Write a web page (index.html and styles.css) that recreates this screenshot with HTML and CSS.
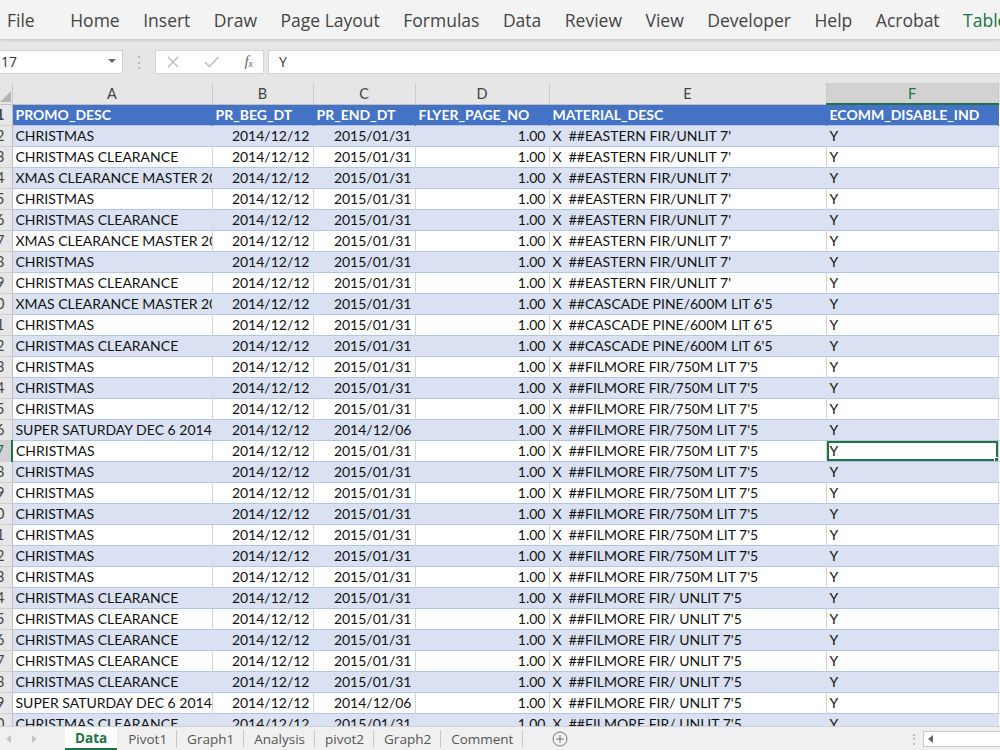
FILE: index.html
```html
<!DOCTYPE html>
<html lang="en">
<head>
    <meta charset="UTF-8">
    <title>Book1 - Excel</title>
    <link rel="stylesheet" href="styles.css">
</head>
<body>
    <div class="menubar">
        <span class="menu-item first">File</span>
        <span class="menu-item">Home</span>
        <span class="menu-item">Insert</span>
        <span class="menu-item">Draw</span>
        <span class="menu-item">Page Layout</span>
        <span class="menu-item">Formulas</span>
        <span class="menu-item">Data</span>
        <span class="menu-item">Review</span>
        <span class="menu-item">View</span>
        <span class="menu-item">Developer</span>
        <span class="menu-item">Help</span>
        <span class="menu-item">Acrobat</span>
        <span class="menu-item table-tab">Table Design</span>
    </div>

    <div class="formula-bar">
        <div class="name-box">
            <span>17</span>
            <svg class="caret" width="8" height="5" viewBox="0 0 8 5"><path d="M0 0h8L4 4z" fill="#666"/></svg>
        </div>
        <div class="grip">⋮</div>
        <div class="fx-buttons">
            <svg width="14" height="14" viewBox="0 0 14 14"><path d="M2 2l10 10M12 2L2 12" stroke="#b8b8b8" stroke-width="1.3" fill="none"/></svg>
            <svg width="16" height="14" viewBox="0 0 16 14"><path d="M1.5 7.5l4 4L14.5 2" stroke="#b8b8b8" stroke-width="1.3" fill="none"/></svg>
            <span class="fx">f<sub>x</sub></span>
        </div>
        <div class="formula-input">Y</div>
    </div>

    <div class="sheet">
        <table class="grid">
            <colgroup>
                <col style="width:12px">
                <col style="width:200px">
                <col style="width:101px">
                <col style="width:102px">
                <col style="width:134px">
                <col style="width:277px">
                <col style="width:172px">
                <col style="width:60px">
            </colgroup>
            <thead>
                <tr class="col-heads">
                    <th class="corner"><span class="corner-tri"></span></th>
                    <th>A</th>
                    <th>B</th>
                    <th>C</th>
                    <th>D</th>
                    <th>E</th>
                    <th class="active-col">F</th>
                    <th>G</th>
                </tr>
            </thead>
            <tbody id="rows">
                <tr class="table-head">
                    <td class="row-num"><span>1</span></td>
                    <td>PROMO_DESC</td>
                    <td>PR_BEG_DT</td>
                    <td>PR_END_DT</td>
                    <td>FLYER_PAGE_NO</td>
                    <td>MATERIAL_DESC</td>
                    <td>ECOMM_DISABLE_IND</td>
                    <td class="blank"></td>
                </tr>
            </tbody>
        </table>
    </div>

    <div class="tabbar">
        <div class="tab-nav">
            <svg width="6" height="8" viewBox="0 0 6 8"><path d="M5 0v8L0 4z" fill="#c4c4c4"/></svg>
            <svg width="6" height="8" viewBox="0 0 6 8"><path d="M1 0v8l5-4z" fill="#c4c4c4"/></svg>
        </div>
        <div class="tabs">
            <span class="tab active">Data</span>
            <span class="tab">Pivot1</span>
            <span class="tab">Graph1</span>
            <span class="tab">Analysis</span>
            <span class="tab">pivot2</span>
            <span class="tab">Graph2</span>
            <span class="tab">Comment</span>
        </div>
        <div class="add-sheet">
            <svg width="16" height="16" viewBox="0 0 16 16"><circle cx="8" cy="8" r="7" stroke="#777" fill="none"/><path d="M8 4v8M4 8h8" stroke="#777"/></svg>
        </div>
        <div class="tab-spacer"></div>
        <div class="grip small">⋮</div>
        <div class="hscroll">
            <span class="hscroll-btn"><svg width="5" height="8" viewBox="0 0 5 8"><path d="M5 0v8L0 4z" fill="#666"/></svg></span>
        </div>
    </div>

    <script>
        const eastern = "X  ##EASTERN FIR/UNLIT 7'";
        const cascade = "X  ##CASCADE PINE/600M LIT 6'5";
        const filmore = "X  ##FILMORE FIR/750M LIT 7'5";
        const unlit = "X  ##FILMORE FIR/ UNLIT 7'5";
        const xmas = 'XMAS CLEARANCE MASTER 2014';
        const super6 = 'SUPER SATURDAY DEC 6 2014';

        const data = [
            ['CHRISTMAS', '2015/01/31', eastern],
            ['CHRISTMAS CLEARANCE', '2015/01/31', eastern],
            [xmas, '2015/01/31', eastern],
            ['CHRISTMAS', '2015/01/31', eastern],
            ['CHRISTMAS CLEARANCE', '2015/01/31', eastern],
            [xmas, '2015/01/31', eastern],
            ['CHRISTMAS', '2015/01/31', eastern],
            ['CHRISTMAS CLEARANCE', '2015/01/31', eastern],
            [xmas, '2015/01/31', cascade],
            ['CHRISTMAS', '2015/01/31', cascade],
            ['CHRISTMAS CLEARANCE', '2015/01/31', cascade],
            ['CHRISTMAS', '2015/01/31', filmore],
            ['CHRISTMAS', '2015/01/31', filmore],
            ['CHRISTMAS', '2015/01/31', filmore],
            [super6, '2014/12/06', filmore],
            ['CHRISTMAS', '2015/01/31', filmore],
            ['CHRISTMAS', '2015/01/31', filmore],
            ['CHRISTMAS', '2015/01/31', filmore],
            ['CHRISTMAS', '2015/01/31', filmore],
            ['CHRISTMAS', '2015/01/31', filmore],
            ['CHRISTMAS', '2015/01/31', filmore],
            ['CHRISTMAS', '2015/01/31', filmore],
            ['CHRISTMAS CLEARANCE', '2015/01/31', unlit],
            ['CHRISTMAS CLEARANCE', '2015/01/31', unlit],
            ['CHRISTMAS CLEARANCE', '2015/01/31', unlit],
            ['CHRISTMAS CLEARANCE', '2015/01/31', unlit],
            ['CHRISTMAS CLEARANCE', '2015/01/31', unlit],
            [super6, '2014/12/06', unlit],
            ['CHRISTMAS CLEARANCE', '2015/01/31', unlit]
        ];

        const tbody = document.getElementById('rows');

        data.forEach(function (row, i) {
            const rowNum = i + 2;
            const selected = rowNum === 17;
            const tr = document.createElement('tr');
            tr.className = rowNum % 2 === 0 ? 'band' : 'plain';

            tr.innerHTML =
                '<td class="row-num' + (selected ? ' active-row' : '') + '"><span>' + rowNum + '</span></td>' +
                '<td>' + row[0] + '</td>' +
                '<td class="num">2014/12/12</td>' +
                '<td class="num">' + row[1] + '</td>' +
                '<td class="num">1.00</td>' +
                '<td class="desc">' + row[2] + '</td>' +
                '<td' + (selected ? ' class="selected"' : '') + '>Y' +
                    (selected ? '<span class="fill-handle"></span>' : '') + '</td>' +
                '<td class="blank"></td>';

            tbody.appendChild(tr);
        });
    </script>
</body>
</html>
```

FILE: styles.css
```css
* {
    margin: 0;
    padding: 0;
    box-sizing: border-box;
}

body {
    width: 1000px;
    height: 750px;
    overflow: hidden;
    background: #e6e6e6;
    font-family: 'Open Sans', 'Noto Sans', sans-serif;
    display: flex;
    flex-direction: column;
}

/* ribbon tabs */
.menubar {
    height: 39px;
    flex-shrink: 0;
    background: #f3f3f3;
    display: flex;
    align-items: center;
    gap: 23.5px;
    padding-left: 7px;
    font-size: 17.5px;
    color: #444;
    white-space: nowrap;
    overflow: hidden;
    box-shadow: 0 1px 3px rgba(0, 0, 0, 0.18);
    position: relative;
    z-index: 1;
}

.menu-item.first {
    margin-right: 12px;
}

.table-tab {
    color: #217346;
}

/* formula bar */
.formula-bar {
    height: 44px;
    flex-shrink: 0;
    display: flex;
    align-items: center;
    background: #e6e6e6;
    padding-top: 1px;
}

.name-box {
    width: 123px;
    height: 24px;
    background: #fff;
    border: 1px solid #cfcfcf;
    border-left: none;
    display: flex;
    align-items: center;
    justify-content: space-between;
    padding: 0 6px 0 1px;
    font-size: 14px;
    color: #333;
}

.grip {
    width: 32px;
    text-align: center;
    color: #b0b0b0;
    font-size: 16px;
    line-height: 1;
}

.fx-buttons {
    width: 109px;
    height: 24px;
    background: #fff;
    border: 1px solid #d6d6d6;
    display: flex;
    align-items: center;
    justify-content: space-between;
    padding: 0 10px 0 10px;
}

.fx {
    font-family: 'Liberation Serif', serif;
    font-style: italic;
    font-size: 15px;
    color: #666;
}

.fx sub {
    font-size: 10px;
    vertical-align: -1px;
}

.formula-input {
    flex: 1;
    height: 24px;
    margin-left: 4px;
    background: #fff;
    border: 1px solid #d6d6d6;
    border-right: none;
    display: flex;
    align-items: center;
    padding-left: 10px;
    font-size: 14px;
    color: #333;
}

/* worksheet */
.sheet {
    flex: 1;
    overflow: hidden;
    background: #fff;
}

.grid {
    border-collapse: collapse;
    table-layout: fixed;
    width: 1058px;
    font-family: 'Lato', 'Liberation Sans', sans-serif;
    font-size: 14px;
    color: #111;
}

.grid td,
.grid th {
    height: 21px;
    padding: 0 3px;
    white-space: nowrap;
    overflow: hidden;
    border-right: 1px solid #d4d4d4;
}

.col-heads th {
    background: #e6e6e6;
    font-weight: normal;
    color: #444;
    font-size: 14.5px;
    border-right: 1px solid #cacaca;
    border-bottom: 1px solid #c0c0c0;
}

.col-heads th.active-col {
    background: #d2d2d2;
    color: #217346;
    border-bottom: 2px solid #217346;
}

.corner {
    position: relative;
}

.corner-tri {
    position: absolute;
    right: 1px;
    bottom: 2px;
    width: 0;
    height: 0;
    border-left: 11px solid transparent;
    border-bottom: 11px solid #b5b5b5;
}

.grid td.row-num {
    background: #e6e6e6;
    border-right: 1px solid #c0c0c0;
    border-bottom: 1px solid #d0d0d0;
    padding: 0;
    color: #444;
    font-size: 14.5px;
}

/* row numbers are centred in a column that is cut by the window edge */
.row-num span {
    display: flex;
    justify-content: flex-end;
    padding-right: 7px;
}

.grid td.active-row {
    background: #d2d2d2;
    color: #217346;
    border-right: 2px solid #217346;
}

.table-head td {
    background: #4472c4;
    color: #fff;
    font-weight: bold;
    border-right-color: #4472c4;
}

.band td {
    background: #d9e1f2;
    border-top: 1px solid #b4c6e7;
    border-bottom: 1px solid #b4c6e7;
    border-right-color: #d9e1f2;
}

.plain td {
    background: #fff;
}

.grid td.blank {
    background: #fff;
    border-top-color: #d4d4d4;
    border-bottom: 1px solid #d4d4d4;
}

.grid td.num {
    text-align: right;
}

.grid td.desc {
    white-space: pre;
    padding-left: 3px;
}

.grid td.selected {
    position: relative;
    box-shadow: inset 0 0 0 2px #217346;
}

.fill-handle {
    position: absolute;
    right: -1px;
    bottom: -1px;
    width: 5px;
    height: 5px;
    background: #217346;
    border: 1px solid #fff;
}

/* sheet tabs */
.tabbar {
    height: 24px;
    flex-shrink: 0;
    background: #f0f0f0;
    border-top: 1px solid #d0d0d0;
    display: flex;
    align-items: stretch;
    font-size: 13.5px;
    color: #555;
}

.tab-nav {
    width: 65px;
    display: flex;
    align-items: center;
    gap: 19px;
    padding-left: 6px;
}

.tabs {
    display: flex;
    align-items: stretch;
}

.tab {
    display: flex;
    align-items: center;
    padding: 0 9px 0 10px;
    border-right: 1px solid #c8c8c8;
    margin: 3px 0;
}

.tab.active {
    background: #fff;
    color: #217346;
    font-weight: bold;
    margin: 0 1px 0 0;
    padding: 0 10px;
    border-bottom: 2px solid #217346;
    border-right: none;
}

.add-sheet {
    display: flex;
    align-items: center;
    padding-left: 29px;
}

.tab-spacer {
    flex: 1;
}

.grip.small {
    width: 18px;
    font-size: 14px;
    display: flex;
    align-items: center;
    justify-content: center;
}

.hscroll {
    width: 77px;
    display: flex;
    align-items: center;
}

.hscroll-btn {
    width: 77px;
    height: 16px;
    background: #fff;
    border: 1px solid #c8c8c8;
    border-right: none;
    display: flex;
    align-items: center;
    padding-left: 4px;
}
```
